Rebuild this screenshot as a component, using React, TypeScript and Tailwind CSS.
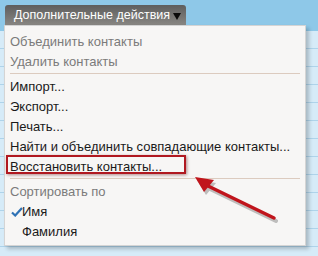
import React from "react";

const rowLines = Array.from({ length: 13 }, (_, i) => i);

const Separator = () => (
  <div className="mx-[5px] mt-[1px] mb-[3px] h-px bg-[#dccbbf]" />
);

const Item = ({
  label,
  disabled,
  indent,
  children,
}: {
  label: string;
  disabled?: boolean;
  indent?: boolean;
  children?: React.ReactNode;
}) => (
  <div
    className={
      "relative h-5 flex items-center whitespace-nowrap text-[13px] " +
      (indent ? "pl-[17px] " : "pl-[5px] ") +
      (disabled ? "text-[#7b7b7b]" : "text-[#1a1a1a]")
    }
  >
    {children}
    {label}
  </div>
);

export default function App() {
  return (
    <div
      className="relative w-[318px] h-[256px] overflow-hidden bg-[#d6ebf8]"
      style={{ fontFamily: '"Liberation Sans", Arial, sans-serif' }}
    >
      {/* page behind the menu */}
      <div className="h-[31px] bg-[#8ec8e8]" />
      <div className="flex flex-col">
        {rowLines.map((i) => (
          <div key={i} className="h-[18px] border-b border-[#aed3ea]" />
        ))}
      </div>

      {/* dropdown button */}
      <div className="absolute left-[5px] top-[5px] w-[181px] h-[21px] rounded-t-[3px] bg-gradient-to-b from-[#5e5e5e] to-[#8a8884] flex items-center pl-[9px] gap-[3px]">
        <span className="text-[12.5px] text-white whitespace-nowrap">
          Дополнительные действия
        </span>
        <svg width="8" height="7" viewBox="0 0 8 7" className="mt-[2px]">
          <path d="M0 0 H8 L4 7 Z" fill="#0a0a0a" />
        </svg>
      </div>

      {/* menu */}
      <div className="absolute left-[4px] top-[25px] w-[302px] h-[221px] bg-[#f7f6f5] border border-[#d4d4d4] shadow-[3px_3px_4px_rgba(0,0,0,0.22)] pt-[6px] pb-[2px]">
        <Item label="Объединить контакты" disabled />
        <Item label="Удалить контакты" disabled />
        <Separator />
        <Item label="Импорт..." />
        <Item label="Экспорт..." />
        <Item label="Печать..." />
        <Item label="Найти и объединить совпадающие контакты..." />
        <Item label="Восстановить контакты...">
          <div className="absolute left-[1px] top-[-2px] w-[180px] h-[19px] border-2 border-[#b01820] shadow-[1px_1px_3px_rgba(90,0,0,0.45)]" />
        </Item>
        <Separator />
        <Item label="Сортировать по" disabled />
        <Item label="Имя" indent>
          <svg
            width="12"
            height="10"
            viewBox="0 0 12 10"
            className="absolute left-[6px] top-[5px]"
          >
            <path
              d="M1 5.5 L4.2 8.5 L11 1"
              fill="none"
              stroke="#2f72b5"
              strokeWidth="2.2"
            />
          </svg>
        </Item>
        <Item label="Фамилия" indent />
      </div>

      {/* annotation arrow */}
      <svg
        width="318"
        height="256"
        className="absolute left-0 top-0 pointer-events-none"
      >
        <g opacity="0.35" transform="translate(2 3)">
          <line x1="274" y1="218" x2="206" y2="185" stroke="#555" strokeWidth="4" strokeLinecap="round" />
          <path d="M195 177 L214 180 L204 192 Z" fill="#555" />
        </g>
        <line x1="274" y1="218" x2="206" y2="185" stroke="#c0151c" strokeWidth="3.5" strokeLinecap="round" />
        <path d="M195 177 L214 180 L204 192 Z" fill="#c0151c" />
      </svg>
    </div>
  );
}
